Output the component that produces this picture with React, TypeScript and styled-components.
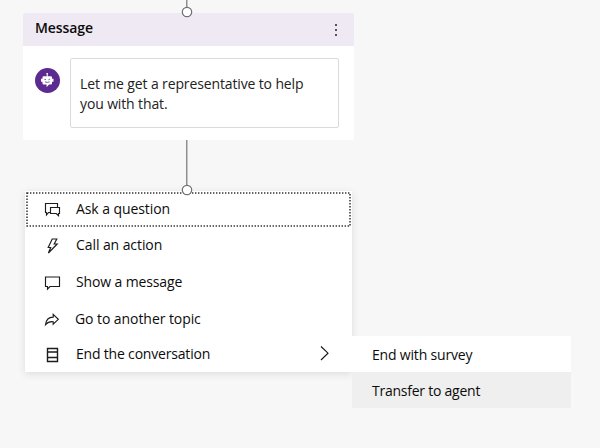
import React from "react";
import styled, { createGlobalStyle } from "styled-components";

const GlobalStyle = createGlobalStyle`
  *, *::before, *::after { box-sizing: border-box; }
  body { margin: 0; background: #f7f7f7; font-family: "Open Sans", "Noto Sans", sans-serif; }
`;

const Canvas = styled.main`
  width: 600px;
  height: 448px;
  overflow: hidden;
  background: #f7f7f7;
  color: #0c0c0c;
`;

const Connector = styled.div<{ $length: number }>`
  position: relative;
  z-index: 2;
  width: 2px;
  height: ${(p) => p.$length}px;
  margin-left: 186px;
  background: linear-gradient(to right, #8f8f8f 1px, #c4c4c4 1px);

  > svg {
    position: absolute;
    left: -5px;
    bottom: -5px;
  }
`;

const Card = styled.section`
  width: 331px;
  height: 127px;
  margin-left: 23px;
  border-radius: 2px;
  background: #fff;
  overflow: hidden;
`;

const CardHeader = styled.header`
  display: flex;
  align-items: center;
  justify-content: space-between;
  height: 33px;
  padding: 0 16px 2px 12px;
  background: #efe9f3;

  > svg { margin-top: 2px; }
`;

const CardBody = styled.div`
  display: flex;
  align-items: flex-start;
  gap: 10px;
  padding: 12px 14px 0 12px;

  > svg { margin-top: 10px; flex: none; }
`;

const MessageBox = styled.div`
  width: 269px;
  height: 70px;
  padding: 14.5px 9px;
  border: 1px solid #dadada;
  border-radius: 2px;
  color: #222;
`;

const Label = styled.span<{ $spacing?: number; $bold?: boolean }>`
  display: block;
  font-size: 14px;
  line-height: 20.5px;
  font-weight: ${(p) => (p.$bold ? 600 : 400)};
  letter-spacing: ${(p) => p.$spacing ?? 0}px;
  white-space: nowrap;
`;

const Menus = styled.div`
  display: flex;
  align-items: flex-start;
  margin-left: 25px;
`;

const Menu = styled.nav`
  width: 327px;
  height: 181px;
  padding: 1px 1px 0;
  background: #fff;
  box-shadow: 0 2px 8px rgba(0, 0, 0, 0.11);
`;

const MenuItem = styled.div<{ $height: number; $gap: number }>`
  position: relative;
  display: flex;
  align-items: center;
  height: ${(p) => p.$height}px;
  padding-left: 18px;
  gap: ${(p) => p.$gap}px;
`;

const Chevron = styled.svg`
  margin: 0 20px 3px auto;
`;

const FocusOutline = styled.svg`
  position: absolute;
  left: 0;
  top: 0;
  pointer-events: none;
`;

const Submenu = styled.nav`
  position: relative;
  width: 219px;
  margin-top: 145px;
`;

const SubmenuItem = styled.div<{ $active?: boolean }>`
  display: flex;
  align-items: center;
  height: 36px;
  padding: 2px 0 0 20px;
  background: ${(p) => (p.$active ? "#efefef" : "#fff")};
`;

const iconPaths = {
  question: "M6 12.5 H4.6 L2.5 15 V12.5 H1.5 V3.5 H13.5 V7.5 M6.5 7.5 H15.5 V13.5 H14.5 V15.6 L12.2 13.5 H6.5 Z",
  action: "M8.2 3 H12.8 L10.2 8 H13.2 L4.4 17 L6.7 11.5 H4.2 Z",
  message: "M1.5 4 H15.5 V13.5 H6 L3.5 16 V13.5 H1.5 Z",
  topic: "M9.2 4.3 L14.3 9.3 L9.2 14.2 V11.7 C5.5 11.3 3.4 12.5 1.5 14.7 C2 10.3 4.6 7.2 9.2 7.1 Z",
  end: "M3.5 3.5 H13.5 V16.5 H3.5 Z M3.5 7 H13.5 M3.5 12.5 H13.5",
};

function MenuIcon({ name }: { name: keyof typeof iconPaths }) {
  return (
    <svg width="17" height="19" viewBox="0 0 17 19" fill="none" stroke="#1c1c1c" strokeWidth={name === "end" ? 1.4 : 1.15}>
      <path d={iconPaths[name]} />
    </svg>
  );
}

function ConnectorNode() {
  return (
    <svg width="12" height="12" viewBox="0 0 12 12">
      <circle cx="6" cy="6" r="4.7" fill="#fff" stroke="#707070" strokeWidth="1.2" />
    </svg>
  );
}

function BotIcon() {
  return (
    <svg width="25" height="25" viewBox="0 0 25 25">
      <circle cx="12.5" cy="12.5" r="12.5" fill="#5b2b90" />
      <path d="M12.2 5V9" stroke="#fff" strokeWidth="1" />
      <circle cx="12.2" cy="5.8" r=".8" fill="#fff" />
      <path d="M8.6 8.2H15.9Q17 8.2 17 9.3V10.7H18.5V13.8H17V15.5Q17 16.6 15.9 16.6H14L11.6 19.3V16.6H8.6Q7.5 16.6 7.5 15.5V13.8H6V10.7H7.5V9.3Q7.5 8.2 8.6 8.2Z" fill="#fff" />
      <path d="M9.4 11.7q.8-.8 1.6 0M13.5 11.7q.8-.8 1.6 0M10 13.8q2.3 1.3 4.6 0" stroke="#5b2b90" strokeWidth=".8" fill="none" />
    </svg>
  );
}

const items: { icon: keyof typeof iconPaths; label: string; spacing: number; height: number; gap: number }[] = [
  { icon: "question", label: "Ask a question", spacing: -0.08, height: 35, gap: 15 },
  { icon: "action", label: "Call an action", spacing: -0.08, height: 37, gap: 15 },
  { icon: "message", label: "Show a message", spacing: -0.13, height: 36, gap: 15 },
  { icon: "topic", label: "Go to another topic", spacing: -0.07, height: 38, gap: 14 },
  { icon: "end", label: "End the conversation", spacing: -0.19, height: 33, gap: 15 },
];

export default function App() {
  return (
    <>
      <GlobalStyle />
      <Canvas>
        <Connector $length={13}><ConnectorNode /></Connector>
        <Card>
          <CardHeader>
            <Label $bold $spacing={-0.1}>Message</Label>
            <svg width="4" height="14" viewBox="0 0 4 14" fill="#222">
              <circle cx="2" cy="2" r="1" /><circle cx="2" cy="7" r="1" /><circle cx="2" cy="12" r="1" />
            </svg>
          </CardHeader>
          <CardBody>
            <BotIcon />
            <MessageBox>
              <Label $spacing={-0.13}>Let me get a representative to help</Label>
              <Label $spacing={-0.13}>you with that.</Label>
            </MessageBox>
          </CardBody>
        </Card>
        <Connector $length={51}><ConnectorNode /></Connector>
        <Menus>
          <Menu>
            {items.map((item, index) => (
              <MenuItem key={item.icon} $height={item.height} $gap={item.gap}>
                <MenuIcon name={item.icon} />
                <Label $spacing={item.spacing}>{item.label}</Label>
                {index === items.length - 1 && (
                  <Chevron width="12" height="16" viewBox="0 0 12 16" fill="none" stroke="#111" strokeWidth="1.1">
                    <path d="M2 1.5L9 8.2L2 15" />
                  </Chevron>
                )}
                {index === 0 && (
                  <FocusOutline width="325" height="35" viewBox="0 0 325 35" fill="none">
                    <rect x="1" y="1" width="323" height="33" stroke="#333" strokeWidth="1.5" strokeDasharray="1.4 1.6" />
                  </FocusOutline>
                )}
              </MenuItem>
            ))}
          </Menu>
          <Submenu>
            <SubmenuItem><Label $spacing={-0.18}>End with survey</Label></SubmenuItem>
            <SubmenuItem $active><Label $spacing={-0.24}>Transfer to agent</Label></SubmenuItem>
          </Submenu>
        </Menus>
      </Canvas>
    </>
  );
}
